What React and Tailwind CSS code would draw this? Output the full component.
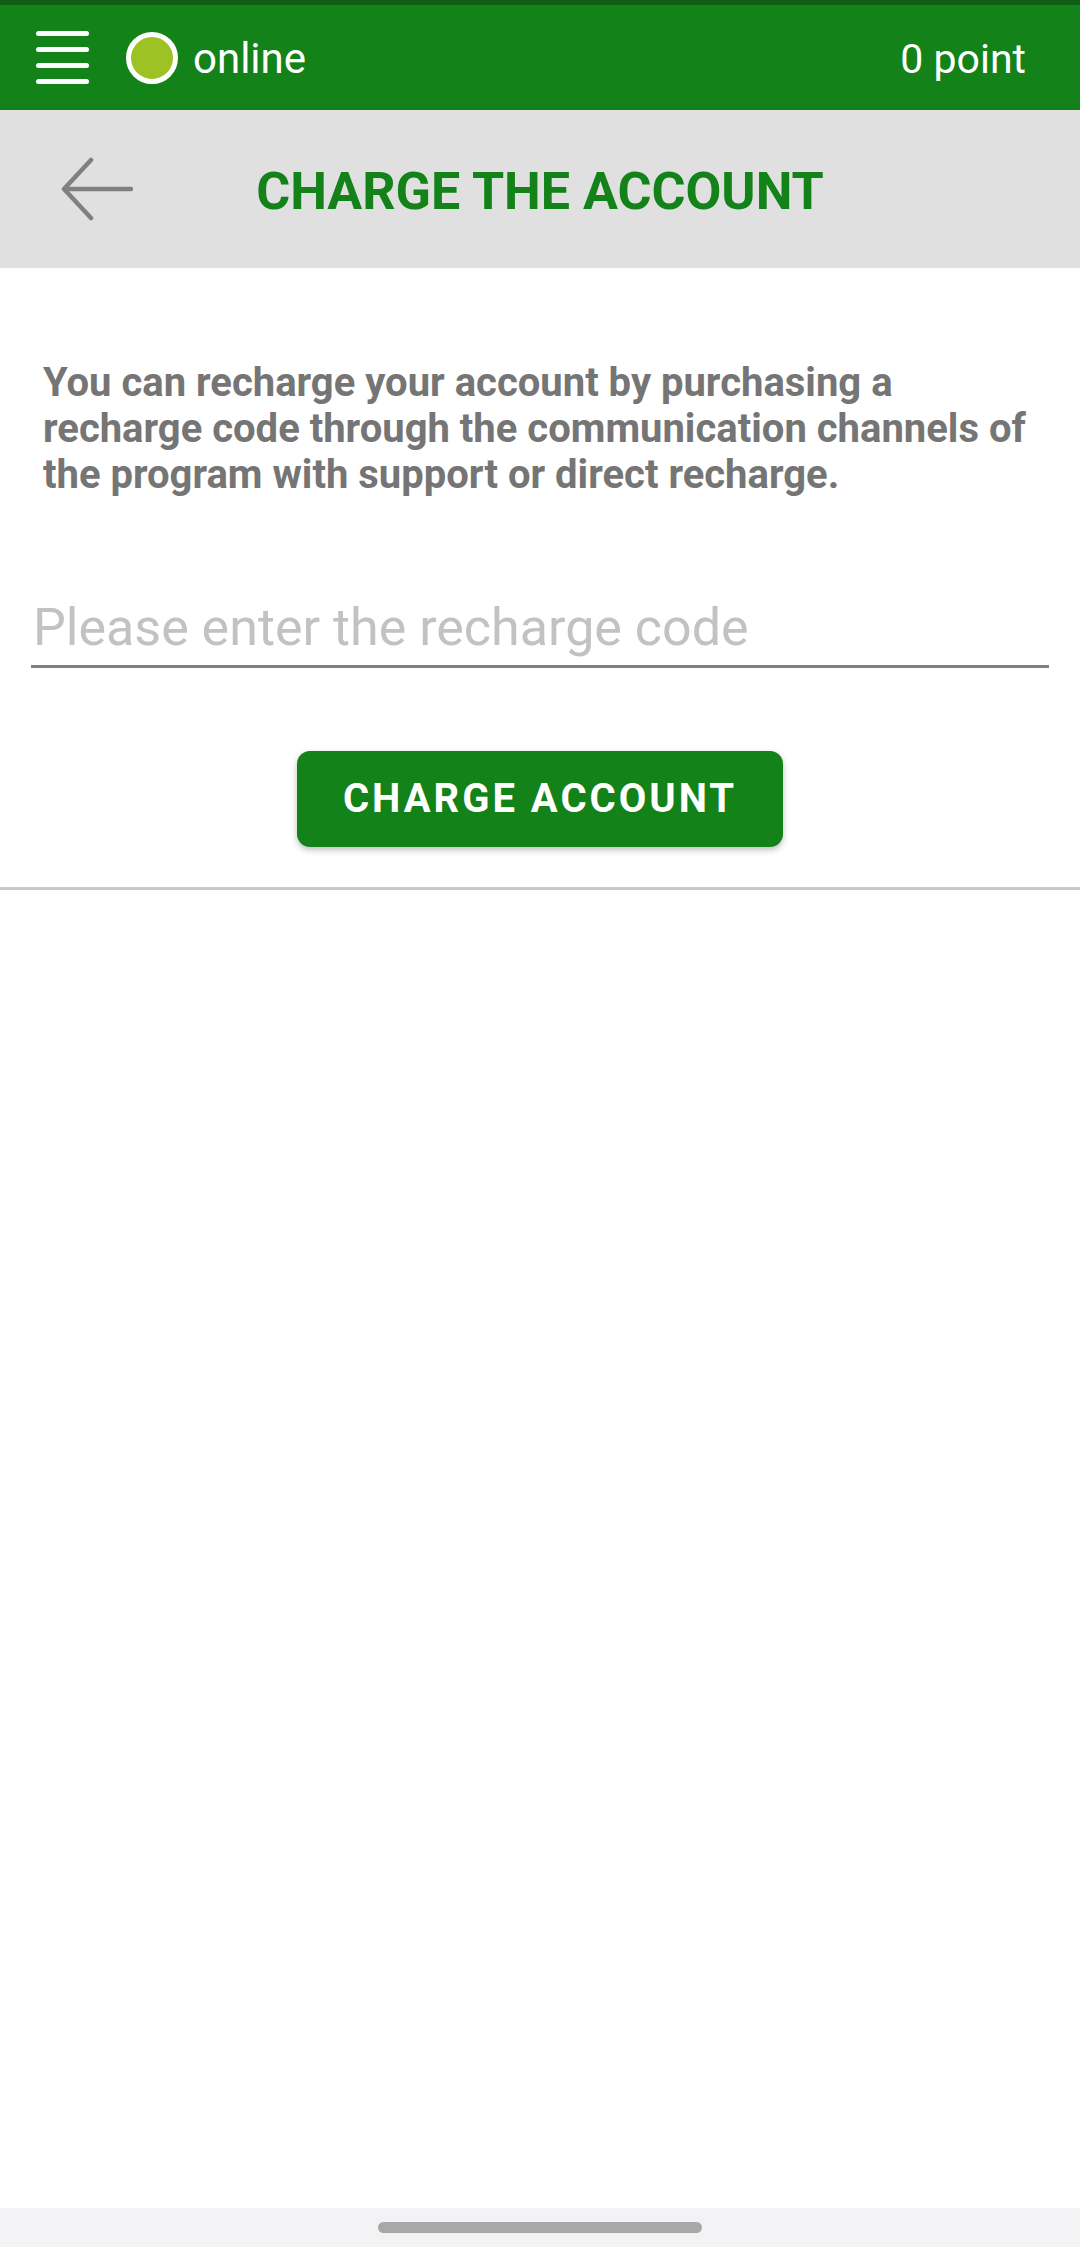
import React from "react";

export default function App() {
  return (
    <div className="flex flex-col min-h-[2247px] bg-white font-['Roboto','Liberation_Sans',sans-serif]">
      {/* Status strip */}
      <div className="h-[5px] bg-[#0f5e14]"></div>

      {/* Top bar */}
      <div className="h-[105px] bg-[#138218] flex items-center pl-[36px] pr-[54px] text-white">
        <div className="flex flex-col gap-[11.5px] w-[53px]">
          <div className="h-[4.5px] bg-white rounded-full"></div>
          <div className="h-[4.5px] bg-white rounded-full"></div>
          <div className="h-[4.5px] bg-white rounded-full"></div>
          <div className="h-[4.5px] bg-white rounded-full"></div>
        </div>
        <div className="ml-[37px] w-[52px] h-[52px] rounded-full border-[5px] border-white bg-[#9cc323]"></div>
        <span className="ml-[15px] text-[42px] leading-none pt-[3px]">online</span>
        <span className="ml-auto text-[41px] leading-none pt-[3px]">0 point</span>
      </div>

      {/* Page header */}
      <div className="h-[158px] bg-[#e0e0e0] flex items-center relative">
        <svg className="ml-[61px] w-[72px] h-[66px]" viewBox="0 0 72 66" fill="none">
          <path d="M70 33H4M30 4L3 33l27 29" stroke="#808080" strokeWidth="4.5" strokeLinecap="round" strokeLinejoin="round" />
        </svg>
        <h1 className="absolute inset-x-0 pt-[5px] text-center text-[52px] font-bold text-[#138218] leading-none pointer-events-none">
          CHARGE THE ACCOUNT
        </h1>
      </div>

      {/* Content */}
      <div className="flex-1 flex flex-col">
        <p className="mt-[92px] pl-[43px] pr-[20px] text-[40px] leading-[46px] font-bold text-[#757575]">
          You can recharge your account by purchasing a<br />
          recharge code through the communication channels of<br />
          the program with support or direct recharge.
        </p>

        <input
          type="text"
          placeholder="Please enter the recharge code"
          className="mt-[99px] mx-[31px] h-[71px] pb-[7px] pl-[2px] border-b-[3px] border-[#808080] text-[52px] text-[#333] placeholder:text-[#c2c2c2] outline-none bg-transparent"
        />

        <div className="flex justify-center mt-[83px]">
          <button className="w-[486px] h-[96px] rounded-[13px] bg-[#138218] text-white text-[40px] font-bold tracking-[3px] shadow-[0_3px_6px_rgba(0,0,0,0.25)]">
            CHARGE ACCOUNT
          </button>
        </div>

        <div className="mt-[40px] h-[3px] bg-[#c8c8c8]"></div>
      </div>

      {/* System nav bar */}
      <div className="h-[39px] bg-[#f3f3f5] flex justify-center pt-[14px]">
        <div className="w-[324px] h-[11px] rounded-full bg-[#a8a8a8]"></div>
      </div>
    </div>
  );
}
